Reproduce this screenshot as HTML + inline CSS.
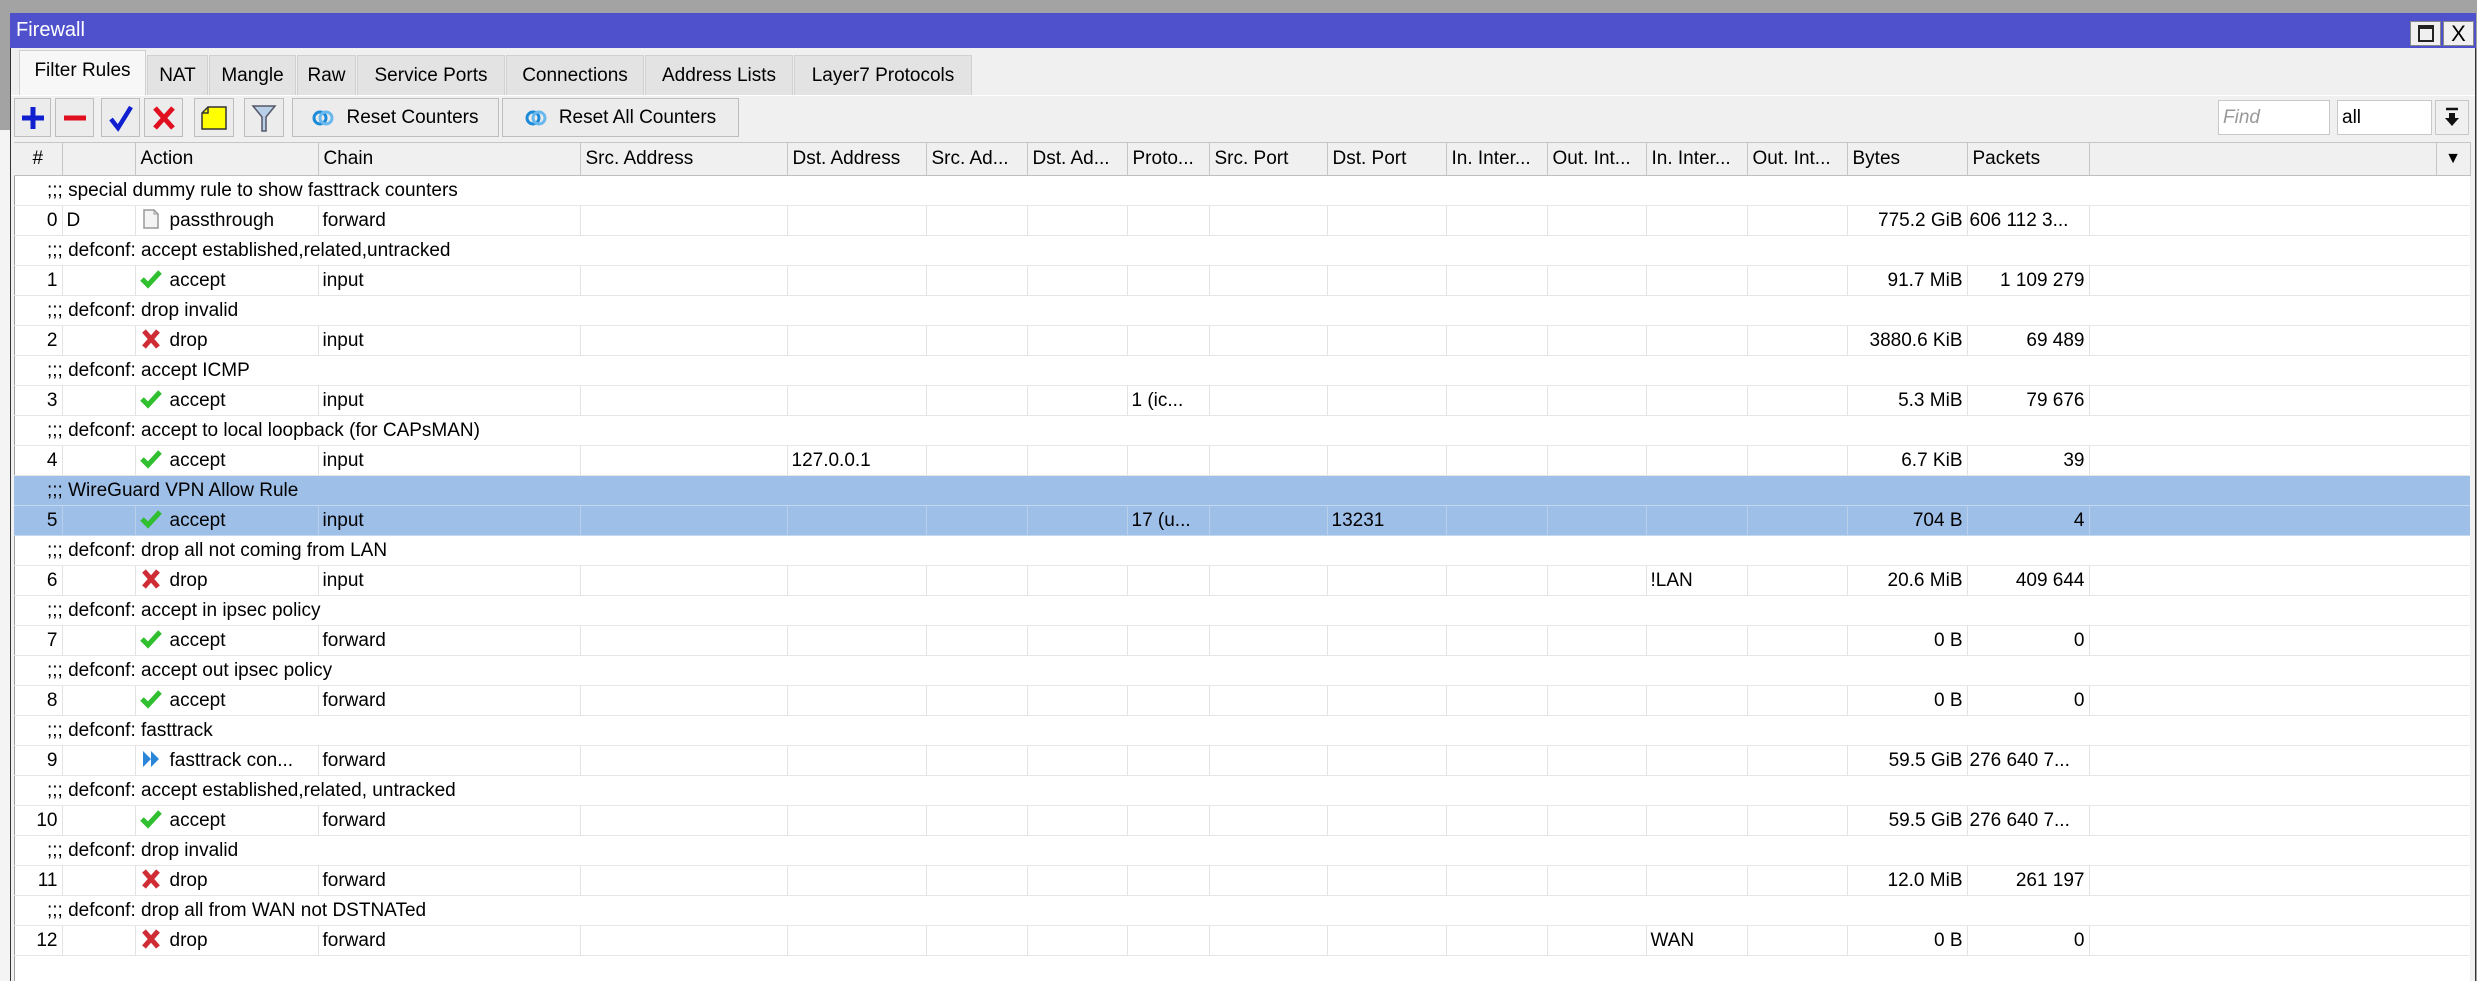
<!DOCTYPE html>
<html><head><meta charset="utf-8">
<style>
*{box-sizing:border-box;margin:0;padding:0}
body{width:2477px;height:981px;overflow:hidden;background:#a3a3a3;font-family:"Liberation Sans",sans-serif;font-size:19px;color:#000;position:relative}
.abs{position:absolute}
#win{left:10px;top:13px;width:2466px;height:968px;background:#f0f0f0;border:1px solid #333;border-bottom:none}
#title{left:10px;top:13px;width:2466px;height:35px;background:#4f51cc;color:#fff;font-size:20px;line-height:35px;padding-left:6px}
.tb{top:21px;width:31px;height:25px;background:#f0f0f0;border:1px solid #888}
.tab{top:55px;height:40px;background:#e3e3e3;border:1px solid #d0d0d0;border-bottom:none;line-height:39px;text-align:center;font-size:19px}
.tab.act{top:50px;height:46px;background:#f7f7f7;border-color:#cfcfcf}
.btn{top:98px;height:39px;background:#ececec;border:1px solid #bdbdbd;line-height:37px;text-align:center}
.inp{top:100px;height:35px;background:#fff;border:1px solid #c8c8c8;line-height:33px;padding-left:4px}
#grid{left:14px;top:142px;width:2456px;height:839px;background:#fff;border-left:1px solid #a0a0a0}
table{border-collapse:collapse;table-layout:fixed;position:absolute;left:14px;top:142px;width:2456px}
th{height:33px;background:#f0f0f0;border-right:1px solid #c5c5c5;border-bottom:1px solid #bfbfbf;border-top:1px solid #c5c5c5;font-weight:normal;text-align:left;padding-left:5px;white-space:nowrap;overflow:hidden}
td{height:30px;border-right:1px solid #e3e3e3;border-bottom:1px solid #e6e6e6;white-space:nowrap;overflow:hidden;padding:0 4px;line-height:29px}
td.c{padding-left:33px;border-right:none}
td.r{text-align:right}
tr.sel td{background:#9ebfe7;border-bottom-color:#c6d8ee;border-right-color:#b9cfea}
.ic{display:inline-block;width:22px;height:20px;vertical-align:-3px;margin-right:8px}
.rc{display:inline-block;vertical-align:-4px;margin-right:12px}
</style></head><body>
<div class="abs" style="left:0;top:130px;width:10px;height:851px;background:#f4f4f4"></div>
<div class="abs" id="win"></div>
<div class="abs" id="title">Firewall</div>
<div class="abs tb" style="left:2410px"><div style="margin:3px 7px;width:16px;height:17px;border:2px solid #222;border-top-width:4px"></div></div>
<div class="abs tb" style="left:2443px;font-size:22px;text-align:center;line-height:23px">X</div>

<div class="abs tab act" style="left:19px;width:127px">Filter Rules</div>
<div class="abs tab" style="left:147px;width:61px">NAT</div>
<div class="abs tab" style="left:209px;width:87px">Mangle</div>
<div class="abs tab" style="left:297px;width:59px">Raw</div>
<div class="abs tab" style="left:357px;width:148px">Service Ports</div>
<div class="abs tab" style="left:506px;width:138px">Connections</div>
<div class="abs tab" style="left:645px;width:148px">Address Lists</div>
<div class="abs tab" style="left:794px;width:178px">Layer7 Protocols</div>
<div class="abs" style="left:11px;top:95px;width:2464px;height:1px;background:#fff"></div>

<div class="abs btn" style="left:14px;width:37px"><svg width="26" height="26" style="margin-top:6px" viewBox="0 0 26 26"><path d="M13 2V24M2 13H24" stroke="#1020d0" stroke-width="5"/></svg></div>
<div class="abs btn" style="left:55px;width:39px"><svg width="26" height="26" style="margin-top:6px" viewBox="0 0 26 26"><path d="M2 13H24" stroke="#e01020" stroke-width="5"/></svg></div>
<div class="abs btn" style="left:101px;width:39px"><svg width="26" height="28" style="margin-top:5px" viewBox="0 0 26 28"><path d="M3 15L10 24L23 3" stroke="#1020d0" stroke-width="4.5" fill="none"/></svg></div>
<div class="abs btn" style="left:144px;width:39px"><svg width="24" height="26" style="margin-top:6px" viewBox="0 0 24 26"><path d="M3 3L21 23M21 3L3 23" stroke="#e01020" stroke-width="5"/></svg></div>
<div class="abs btn" style="left:194px;width:40px"><svg width="28" height="28" style="margin-top:5px" viewBox="0 0 28 28"><path d="M8 3H26V25H2V9Z" fill="#ffff00" stroke="#333" stroke-width="1.5"/><path d="M2 9H8V3" fill="none" stroke="#333" stroke-width="1.5"/></svg></div>
<div class="abs btn" style="left:244px;width:40px"><svg width="26" height="30" style="margin-top:4px" viewBox="0 0 26 30"><path d="M2 3H24L15 14V28H11V14Z" fill="#b8cfe8" stroke="#556" stroke-width="1.5"/></svg></div>
<div class="abs btn" style="left:292px;width:207px"><svg class="rc" width="22" height="18" viewBox="0 0 22 18"><circle cx="8" cy="9" r="6" fill="none" stroke="#1b8ad8" stroke-width="3"/><circle cx="14" cy="9" r="6" fill="none" stroke="#6ab8ee" stroke-width="3"/></svg>Reset Counters</div>
<div class="abs btn" style="left:502px;width:237px"><svg class="rc" width="22" height="18" viewBox="0 0 22 18"><circle cx="8" cy="9" r="6" fill="none" stroke="#1b8ad8" stroke-width="3"/><circle cx="14" cy="9" r="6" fill="none" stroke="#6ab8ee" stroke-width="3"/></svg>Reset All Counters</div>
<div class="abs inp" style="left:2218px;width:112px;color:#999;font-style:italic">Find</div>
<div class="abs inp" style="left:2337px;width:95px">all</div>
<div class="abs inp" style="left:2435px;width:34px;padding:0;background:#f0f0f0;text-align:center"><svg width="16" height="22" style="margin-top:6px" viewBox="0 0 16 22"><path d="M2 2H14" stroke="#111" stroke-width="2.5"/><path d="M5 6H11V11H15L8 19L1 11H5Z" fill="#111"/></svg></div>

<div class="abs" id="grid"></div>
<table>
<colgroup><col style="width:48px"><col style="width:73px"><col style="width:183px"><col style="width:262px"><col style="width:207px"><col style="width:139px"><col style="width:101px"><col style="width:100px"><col style="width:82px"><col style="width:118px"><col style="width:119px"><col style="width:101px"><col style="width:99px"><col style="width:101px"><col style="width:100px"><col style="width:120px"><col style="width:122px"><col style="width:347px"><col style="width:34px"></colgroup>
<tr><th style="text-align:center;padding:0">#</th><th></th><th>Action</th><th>Chain</th><th>Src. Address</th><th>Dst. Address</th><th>Src. Ad...</th><th>Dst. Ad...</th><th>Proto...</th><th>Src. Port</th><th>Dst. Port</th><th>In. Inter...</th><th>Out. Int...</th><th>In. Inter...</th><th>Out. Int...</th><th>Bytes</th><th>Packets</th><th></th><th style="padding:0;text-align:center;font-size:16px">&#9660;</th></tr>
<tr><td class="c" colspan="19">;;; special dummy rule to show fasttrack counters</td></tr>
<tr><td class="r">0</td><td>D</td><td><svg class="ic" viewBox="0 0 22 20"><path d="M4 1H14L18 5V19H4Z" fill="#f4f4f4" stroke="#999" stroke-width="1.5"/><path d="M14 1V5H18" fill="none" stroke="#999"/></svg>passthrough</td><td>forward</td><td></td><td></td><td></td><td></td><td></td><td></td><td></td><td></td><td></td><td></td><td></td><td class="r">775.2 GiB</td><td class="r" style="text-align:left;padding-left:2px">606 112 3...</td><td style="border-right:none"></td><td style="border-right:none"></td></tr>
<tr><td class="c" colspan="19">;;; defconf: accept established,related,untracked</td></tr>
<tr><td class="r">1</td><td></td><td><svg class="ic" viewBox="0 0 22 20"><path d="M2 10L8 16L20 3" stroke="#2fbf2f" stroke-width="5" fill="none"/></svg>accept</td><td>input</td><td></td><td></td><td></td><td></td><td></td><td></td><td></td><td></td><td></td><td></td><td></td><td class="r">91.7 MiB</td><td class="r">1 109 279</td><td style="border-right:none"></td><td style="border-right:none"></td></tr>
<tr><td class="c" colspan="19">;;; defconf: drop invalid</td></tr>
<tr><td class="r">2</td><td></td><td><svg class="ic" viewBox="0 0 22 20"><path d="M4 2L18 18M18 2L4 18" stroke="#d02c36" stroke-width="5"/></svg>drop</td><td>input</td><td></td><td></td><td></td><td></td><td></td><td></td><td></td><td></td><td></td><td></td><td></td><td class="r">3880.6 KiB</td><td class="r">69 489</td><td style="border-right:none"></td><td style="border-right:none"></td></tr>
<tr><td class="c" colspan="19">;;; defconf: accept ICMP</td></tr>
<tr><td class="r">3</td><td></td><td><svg class="ic" viewBox="0 0 22 20"><path d="M2 10L8 16L20 3" stroke="#2fbf2f" stroke-width="5" fill="none"/></svg>accept</td><td>input</td><td></td><td></td><td></td><td></td><td>1 (ic...</td><td></td><td></td><td></td><td></td><td></td><td></td><td class="r">5.3 MiB</td><td class="r">79 676</td><td style="border-right:none"></td><td style="border-right:none"></td></tr>
<tr><td class="c" colspan="19">;;; defconf: accept to local loopback (for CAPsMAN)</td></tr>
<tr><td class="r">4</td><td></td><td><svg class="ic" viewBox="0 0 22 20"><path d="M2 10L8 16L20 3" stroke="#2fbf2f" stroke-width="5" fill="none"/></svg>accept</td><td>input</td><td></td><td>127.0.0.1</td><td></td><td></td><td></td><td></td><td></td><td></td><td></td><td></td><td></td><td class="r">6.7 KiB</td><td class="r">39</td><td style="border-right:none"></td><td style="border-right:none"></td></tr>
<tr class="sel"><td class="c" colspan="19">;;; WireGuard VPN Allow Rule</td></tr>
<tr class="sel"><td class="r">5</td><td></td><td><svg class="ic" viewBox="0 0 22 20"><path d="M2 10L8 16L20 3" stroke="#2fbf2f" stroke-width="5" fill="none"/></svg>accept</td><td>input</td><td></td><td></td><td></td><td></td><td>17 (u...</td><td></td><td>13231</td><td></td><td></td><td></td><td></td><td class="r">704 B</td><td class="r">4</td><td style="border-right:none"></td><td style="border-right:none"></td></tr>
<tr><td class="c" colspan="19">;;; defconf: drop all not coming from LAN</td></tr>
<tr><td class="r">6</td><td></td><td><svg class="ic" viewBox="0 0 22 20"><path d="M4 2L18 18M18 2L4 18" stroke="#d02c36" stroke-width="5"/></svg>drop</td><td>input</td><td></td><td></td><td></td><td></td><td></td><td></td><td></td><td></td><td></td><td>!LAN</td><td></td><td class="r">20.6 MiB</td><td class="r">409 644</td><td style="border-right:none"></td><td style="border-right:none"></td></tr>
<tr><td class="c" colspan="19">;;; defconf: accept in ipsec policy</td></tr>
<tr><td class="r">7</td><td></td><td><svg class="ic" viewBox="0 0 22 20"><path d="M2 10L8 16L20 3" stroke="#2fbf2f" stroke-width="5" fill="none"/></svg>accept</td><td>forward</td><td></td><td></td><td></td><td></td><td></td><td></td><td></td><td></td><td></td><td></td><td></td><td class="r">0 B</td><td class="r">0</td><td style="border-right:none"></td><td style="border-right:none"></td></tr>
<tr><td class="c" colspan="19">;;; defconf: accept out ipsec policy</td></tr>
<tr><td class="r">8</td><td></td><td><svg class="ic" viewBox="0 0 22 20"><path d="M2 10L8 16L20 3" stroke="#2fbf2f" stroke-width="5" fill="none"/></svg>accept</td><td>forward</td><td></td><td></td><td></td><td></td><td></td><td></td><td></td><td></td><td></td><td></td><td></td><td class="r">0 B</td><td class="r">0</td><td style="border-right:none"></td><td style="border-right:none"></td></tr>
<tr><td class="c" colspan="19">;;; defconf: fasttrack</td></tr>
<tr><td class="r">9</td><td></td><td><svg class="ic" viewBox="0 0 22 20"><path d="M3 2L11 10L3 18ZM11 2L19 10L11 18Z" fill="#2a86d8"/></svg>fasttrack con...</td><td>forward</td><td></td><td></td><td></td><td></td><td></td><td></td><td></td><td></td><td></td><td></td><td></td><td class="r">59.5 GiB</td><td style="padding-left:2px">276 640 7...</td><td style="border-right:none"></td><td style="border-right:none"></td></tr>
<tr><td class="c" colspan="19">;;; defconf: accept established,related, untracked</td></tr>
<tr><td class="r">10</td><td></td><td><svg class="ic" viewBox="0 0 22 20"><path d="M2 10L8 16L20 3" stroke="#2fbf2f" stroke-width="5" fill="none"/></svg>accept</td><td>forward</td><td></td><td></td><td></td><td></td><td></td><td></td><td></td><td></td><td></td><td></td><td></td><td class="r">59.5 GiB</td><td style="padding-left:2px">276 640 7...</td><td style="border-right:none"></td><td style="border-right:none"></td></tr>
<tr><td class="c" colspan="19">;;; defconf: drop invalid</td></tr>
<tr><td class="r">11</td><td></td><td><svg class="ic" viewBox="0 0 22 20"><path d="M4 2L18 18M18 2L4 18" stroke="#d02c36" stroke-width="5"/></svg>drop</td><td>forward</td><td></td><td></td><td></td><td></td><td></td><td></td><td></td><td></td><td></td><td></td><td></td><td class="r">12.0 MiB</td><td class="r">261 197</td><td style="border-right:none"></td><td style="border-right:none"></td></tr>
<tr><td class="c" colspan="19">;;; defconf: drop all from WAN not DSTNATed</td></tr>
<tr><td class="r">12</td><td></td><td><svg class="ic" viewBox="0 0 22 20"><path d="M4 2L18 18M18 2L4 18" stroke="#d02c36" stroke-width="5"/></svg>drop</td><td>forward</td><td></td><td></td><td></td><td></td><td></td><td></td><td></td><td></td><td></td><td>WAN</td><td></td><td class="r">0 B</td><td class="r">0</td><td style="border-right:none"></td><td style="border-right:none"></td></tr>
</table>
</body></html>
